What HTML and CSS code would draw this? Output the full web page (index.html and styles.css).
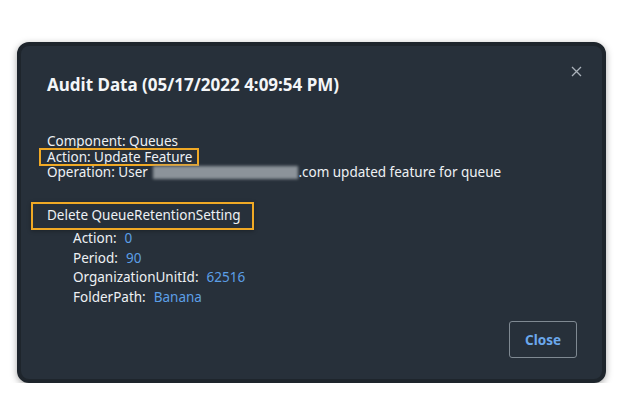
FILE: index.html
```html
<!DOCTYPE html>
<html lang="en">

<head>
    <meta charset="UTF-8">
    <meta name="viewport" content="width=device-width, initial-scale=1.0">
    <title>Audit Data</title>

    <link rel="stylesheet" href="styles.css">
</head>

<body>

    <div class="page">
        <div class="dialog">
            <span class="close-x">
                <svg width="11" height="11" viewBox="0 0 11 11">
                    <path d="M1 1 L10 10 M10 1 L1 10" stroke="#aab2ba" stroke-width="1.3" fill="none" />
                </svg>
            </span>

            <h2 class="title">Audit Data (05/17/2022 4:09:54 PM)</h2>

            <div class="details">
                <p>Component: Queues</p>
                <p><span class="marked">Action: Update Feature</span></p>
                <p>Operation: User <span class="hidden-mail"></span>.com updated feature for queue</p>
            </div>

            <div class="change-box">Delete QueueRetentionSetting</div>

            <ul class="props">
                <li><span class="label">Action:</span><span class="value">0</span></li>
                <li><span class="label">Period:</span><span class="value">90</span></li>
                <li><span class="label">OrganizationUnitId:</span><span class="value">62516</span></li>
                <li><span class="label">FolderPath:</span><span class="value">Banana</span></li>
            </ul>

            <div class="footer">
                <button class="btn-close">Close</button>
            </div>
        </div>
    </div>

</body>

</html>
```

FILE: styles.css
```css
html,
body,
div,
span,
h2,
p,
ul,
li {
    margin: 0;
    padding: 0;
    border: 0;
    font-size: 100%;
    font: inherit;
}

ul {
    list-style: none;
}

body {
    background-color: #ffffff;
    font-family: "Noto Sans", "Open Sans", sans-serif;
    color: #eef1f4;
}

.page {
    padding: 42px 21px 0 17px;
}

.dialog {
    position: relative;
    background-color: #27303a;
    border: 4px solid #1e252c;
    border-radius: 12px;
    box-shadow: 0 2px 7px rgba(0, 0, 0, 0.35);
    padding: 29px 25px 21px 26px;
}

.close-x {
    position: absolute;
    top: 20px;
    right: 20px;
    display: flex;
}

.title {
    font-size: 17px;
    font-weight: 700;
    line-height: 20px;
    color: #f4f6f8;
}

.details {
    margin-top: 39px;
    font-size: 13.5px;
    line-height: 15.6px;
}

.details p {
    height: 15.6px;
}

.marked {
    position: relative;
    display: inline-block;
    vertical-align: top;
    line-height: 15.6px;
}

.marked::after {
    content: "";
    position: absolute;
    top: -2px;
    bottom: -1px;
    left: -8px;
    right: -7px;
    border: 2px solid #f0a925;
}

.hidden-mail {
    display: inline-block;
    width: 145px;
    height: 13px;
    vertical-align: -2px;
    background-color: #8c939a;
    filter: blur(1.5px);
    margin-left: 2px;
}

.change-box {
    display: inline-block;
    margin: 21px 0 0 -16px;
    padding: 4px 11px 5px 14px;
    border: 2px solid #f0a925;
    font-size: 13.5px;
    line-height: 15.6px;
    box-shadow: 0 1px 4px rgba(0, 0, 0, 0.3);
}

.props {
    margin: -1px 0 0 26px;
    font-size: 13.5px;
    line-height: 19.5px;
}

.props .label {
    margin-right: 8px;
}

.props .value {
    color: #5c9fe6;
}

.footer {
    display: flex;
    justify-content: flex-end;
    margin-top: 14px;
}

.btn-close {
    width: 68px;
    height: 37px;
    background-color: transparent;
    border: 1px solid #7f8992;
    border-radius: 3px;
    color: #6ba8ec;
    font-family: "Noto Sans", "Open Sans", sans-serif;
    font-size: 13.5px;
    font-weight: 700;
}
```
